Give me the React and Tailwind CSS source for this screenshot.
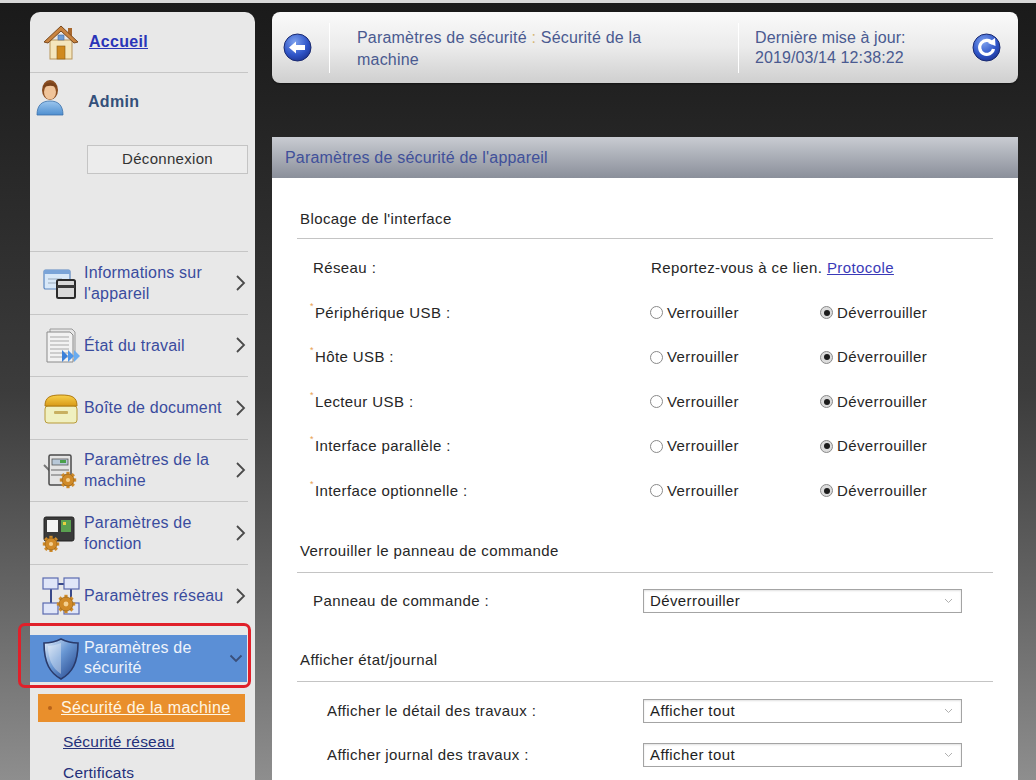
import React from "react";

const Chevron = () => (
  <svg width="11" height="18" viewBox="0 0 11 18" className="shrink-0">
    <path d="M2 2 L9 9 L2 16" fill="none" stroke="#4a4a4a" strokeWidth="1.8" />
  </svg>
);

const HouseIcon = () => (
  <svg width="38" height="38" viewBox="0 0 38 38">
    <rect x="26" y="5" width="4" height="9" fill="#a8682e" />
    <rect x="8" y="17" width="22" height="19" fill="#f4e6bd" stroke="#b8955a" strokeWidth="1" />
    <polygon points="19,3 2,19 6,20 19,8 32,20 36,19" fill="#c98440" stroke="#7a4a1e" strokeWidth="1" />
    <rect x="16" y="12" width="6" height="5" fill="#6f9fd6" stroke="#4a6a9a" strokeWidth="0.6" />
    <rect x="15" y="23" width="8" height="13" fill="#d08a1e" stroke="#8a5a10" strokeWidth="0.6" />
  </svg>
);

const PersonIcon = () => (
  <svg width="30" height="40" viewBox="0 0 30 40">
    <defs>
      <linearGradient id="shirt" x1="0" y1="0" x2="0" y2="1">
        <stop offset="0" stopColor="#9cc6ee" />
        <stop offset="1" stopColor="#4f8fd0" />
      </linearGradient>
    </defs>
    <path d="M2 38 C2 28 7 24 15 24 C23 24 28 28 28 38 Z" fill="url(#shirt)" stroke="#3a70aa" strokeWidth="0.8" />
    <ellipse cx="15" cy="13" rx="8" ry="10" fill="#8a4e22" />
    <ellipse cx="15" cy="15" rx="6" ry="7.5" fill="#f0c49a" />
    <path d="M8 11 C9 4 21 4 22 11 C19 8 12 8 8 11 Z" fill="#7a421a" />
  </svg>
);

const InfoIcon = () => (
  <svg width="38" height="38" viewBox="0 0 38 38">
    <rect x="2" y="6" width="26" height="19" rx="1.5" fill="#d8e8f8" stroke="#5a86c0" strokeWidth="1.2" />
    <rect x="2" y="6" width="26" height="4" fill="#7aa4d8" />
    <line x1="6" y1="15" x2="20" y2="15" stroke="#9ab" strokeWidth="1" />
    <line x1="6" y1="19" x2="16" y2="19" stroke="#9ab" strokeWidth="1" />
    <rect x="15" y="16" width="18" height="18" rx="1.5" fill="#d9d9d9" stroke="#2b2b2b" strokeWidth="2" />
    <rect x="15" y="21" width="18" height="3" fill="#3a3a3a" />
  </svg>
);

const JobIcon = () => (
  <svg width="38" height="38" viewBox="0 0 38 38">
    <polygon points="8,3 30,3 33,6 33,34 8,34" fill="#e6e6e6" stroke="#9a9a9a" strokeWidth="1" />
    <polygon points="5,6 28,6 31,9 31,36 5,36" fill="#f2f2f2" stroke="#8a8a8a" strokeWidth="1" />
    {[11, 15, 19, 23, 27, 31].map((y) => (
      <line key={y} x1="8" y1={y} x2="27" y2={y} stroke="#a8a8a8" strokeWidth="1" />
    ))}
    <polygon points="20,24 26,30 20,36" fill="#3a7fd8" />
    <polygon points="26,24 32,30 26,36" fill="#4e95e8" />
    <polygon points="32,24 38,30 32,36" fill="#6aacf0" />
  </svg>
);

const BoxIcon = () => (
  <svg width="38" height="38" viewBox="0 0 38 38">
    <defs>
      <linearGradient id="lid" x1="0" y1="0" x2="0" y2="1">
        <stop offset="0" stopColor="#f8d04a" />
        <stop offset="1" stopColor="#d89a18" />
      </linearGradient>
    </defs>
    <rect x="3" y="17" width="32" height="17" rx="3" fill="#f0f0c0" stroke="#b89a38" strokeWidth="1" />
    <rect x="12" y="22" width="14" height="3" rx="1" fill="#c8b060" />
    <path d="M3 17 C3 8 8 6 19 6 C30 6 35 8 35 17 Z" fill="url(#lid)" stroke="#b07a10" strokeWidth="1" />
  </svg>
);

const Gear = ({ cx, cy, r, color = "#d08a28" }) => {
  const teeth = [];
  for (let i = 0; i < 8; i++) {
    teeth.push(
      <rect
        key={i}
        x={cx - 1.6}
        y={cy - r - 2.2}
        width="3.2"
        height="4"
        fill={color}
        transform={`rotate(${i * 45} ${cx} ${cy})`}
      />
    );
  }
  return (
    <g>
      {teeth}
      <circle cx={cx} cy={cy} r={r} fill={color} stroke="#8a5a10" strokeWidth="0.6" />
      <circle cx={cx} cy={cy} r={r * 0.35} fill="#f4d090" />
    </g>
  );
};

const MachineIcon = () => (
  <svg width="38" height="38" viewBox="0 0 38 38">
    <line x1="2" y1="14" x2="8" y2="20" stroke="#777" strokeWidth="2" />
    <rect x="7" y="4" width="22" height="30" rx="1.5" fill="#e4e4e4" stroke="#4a4a4a" strokeWidth="1.5" />
    <rect x="10" y="8" width="16" height="6" fill="#b8c8d8" stroke="#555" strokeWidth="0.8" />
    <rect x="18" y="9" width="6" height="3" fill="#4aa04a" />
    <line x1="9" y1="19" x2="27" y2="19" stroke="#666" strokeWidth="1" />
    <line x1="9" y1="24" x2="27" y2="24" stroke="#666" strokeWidth="1" />
    <Gear cx={26} cy={29} r={6} />
  </svg>
);

const FunctionIcon = () => (
  <svg width="38" height="38" viewBox="0 0 38 38">
    <rect x="2" y="3" width="30" height="24" rx="2" fill="#3a3a3a" stroke="#222" strokeWidth="1" />
    <rect x="5" y="6" width="11" height="12" fill="#f4f4f4" />
    <rect x="19" y="6" width="10" height="12" fill="#5aa050" />
    <rect x="21" y="8" width="3" height="3" fill="#e8d040" />
    <Gear cx={9} cy={30} r={6} />
  </svg>
);

const NetworkIcon = () => (
  <svg width="38" height="40" viewBox="0 0 38 40">
    <line x1="9" y1="8" x2="29" y2="8" stroke="#3a4a8a" strokeWidth="2" />
    <line x1="9" y1="8" x2="9" y2="32" stroke="#3a4a8a" strokeWidth="2" />
    <line x1="29" y1="8" x2="29" y2="32" stroke="#3a4a8a" strokeWidth="2" />
    <rect x="1" y="2" width="15" height="11" fill="#e0e6f8" stroke="#5a6ab0" strokeWidth="1.2" />
    <rect x="22" y="2" width="15" height="11" fill="#e0e6f8" stroke="#5a6ab0" strokeWidth="1.2" />
    <rect x="1" y="27" width="15" height="11" fill="#e0e6f8" stroke="#5a6ab0" strokeWidth="1.2" />
    <rect x="22" y="27" width="15" height="11" fill="#e0e6f8" stroke="#5a6ab0" strokeWidth="1.2" />
    <Gear cx={24} cy={28} r={7} />
  </svg>
);

const ShieldIcon = () => (
  <svg width="38" height="44" viewBox="0 0 38 44">
    <defs>
      <linearGradient id="sh" x1="0" y1="0" x2="1" y2="1">
        <stop offset="0" stopColor="#e8f0fa" />
        <stop offset="0.45" stopColor="#6a98d4" />
        <stop offset="1" stopColor="#1e3e86" />
      </linearGradient>
    </defs>
    <path d="M19 2 C25 5 31 6 36 6 C36 26 30 36 19 42 C8 36 2 26 2 6 C7 6 13 5 19 2 Z" fill="url(#sh)" stroke="#2a3a6a" strokeWidth="1.6" />
    <path d="M19 6 C14 8 9 9 6 9 C6 22 10 31 19 37 Z" fill="#ffffff" opacity="0.35" />
  </svg>
);

const BackIcon = () => (
  <svg width="29" height="29" viewBox="0 0 29 29">
    <defs>
      <radialGradient id="bk" cx="0.4" cy="0.3" r="0.8">
        <stop offset="0" stopColor="#7ea2ee" />
        <stop offset="0.6" stopColor="#2f55c8" />
        <stop offset="1" stopColor="#1a2e8a" />
      </radialGradient>
    </defs>
    <circle cx="14.5" cy="14.5" r="13.5" fill="url(#bk)" stroke="#1a2a70" strokeWidth="1" />
    <path d="M6 14.5 L13 8.5 L13 12 L22 12 L22 17 L13 17 L13 20.5 Z" fill="#ffffff" />
  </svg>
);

const RefreshIcon = () => (
  <svg width="29" height="29" viewBox="0 0 29 29">
    <defs>
      <radialGradient id="rf" cx="0.4" cy="0.3" r="0.8">
        <stop offset="0" stopColor="#7ea2ee" />
        <stop offset="0.6" stopColor="#2f55c8" />
        <stop offset="1" stopColor="#1a2e8a" />
      </radialGradient>
    </defs>
    <circle cx="14.5" cy="14.5" r="13.5" fill="url(#rf)" stroke="#1a2a70" strokeWidth="1" />
    <path d="M20.5 10.5 A7 7 0 1 0 21.5 16" fill="none" stroke="#ffffff" strokeWidth="3.2" />
    <polygon points="16,10 23,5 23.5,13" fill="#ffffff" />
  </svg>
);

const SelectArrow = () => (
  <svg width="9" height="6" viewBox="0 0 9 6">
    <path d="M1 1 L4.5 4.5 L8 1" fill="none" stroke="#b0b0b0" strokeWidth="1" />
  </svg>
);

const Radio = ({ checked }) =>
  checked ? (
    <span className="w-[13px] h-[13px] rounded-full border border-[#8a8a8a] bg-[#dcdcdc] flex items-center justify-center shrink-0">
      <span className="w-[6px] h-[6px] rounded-full bg-[#1c1c1c]" />
    </span>
  ) : (
    <span className="w-[13px] h-[13px] rounded-full border border-[#8a8a8a] bg-white shrink-0" />
  );

const Select = ({ value }) => (
  <div className="w-[319px] h-[24px] border border-[#a4a4a4] shadow-[inset_0_1px_2px_rgba(0,0,0,0.12)] bg-white flex items-center justify-between pl-[6px] pr-[8px] text-[15px] text-[#1e1e1e]">
    <span>{value}</span>
    <SelectArrow />
  </div>
);

const menu = [
  { icon: <InfoIcon />, lines: ["Informations sur", "l'appareil"] },
  { icon: <JobIcon />, lines: ["État du travail"] },
  { icon: <BoxIcon />, lines: ["Boîte de document"] },
  { icon: <MachineIcon />, lines: ["Paramètres de la", "machine"] },
  { icon: <FunctionIcon />, lines: ["Paramètres de", "fonction"] },
  { icon: <NetworkIcon />, lines: ["Paramètres réseau"] },
];

const radioRows = [
  "Périphérique USB :",
  "Hôte USB :",
  "Lecteur USB :",
  "Interface parallèle :",
  "Interface optionnelle :",
];

export default function App() {
  return (
    <div className="w-[1036px] h-[780px] overflow-hidden border-t-[3px] border-[#d8d8d8] bg-gradient-to-b from-[#1a1a1a] via-[#3c3c3c] to-[#8e8e8e] flex gap-[17px] pl-[30px] pt-[9px] font-['Liberation_Sans',Arial,sans-serif]">
      {/* Sidebar */}
      <div className="w-[225px] h-[800px] shrink-0 rounded-t-[10px] bg-[#e8e8e8] flex flex-col">
        <div className="h-[61px] border-b border-[#c6c6c6] mr-[7px] flex items-center pl-[12px] gap-[9px]">
          <HouseIcon />
          <span className="text-[16px] font-bold text-[#2a34b8] underline tracking-[0.3px]">Accueil</span>
        </div>
        <div className="h-[179px] border-b border-[#c6c6c6] mr-[7px] flex flex-col">
          <div className="flex items-start pl-[5px] pt-[4px] gap-[23px]">
            <PersonIcon />
            <span className="text-[16px] font-bold text-[#34507a] mt-[13px] tracking-[0.3px]">Admin</span>
          </div>
          <div className="ml-[57px] mt-[28px] w-[161px] h-[29px] border border-[#c4c4c4] bg-[#ececec] flex items-center justify-center text-[15px] text-[#333] tracking-[0.3px]">
            Déconnexion
          </div>
        </div>
        {menu.map((m, i) => (
          <div
            key={i}
            className={`h-[62.5px] mr-[7px] flex items-center pl-[12px] pr-[2px] ${i < menu.length - 1 ? "border-b border-[#c6c6c6]" : ""}`}
          >
            <div className="w-[42px] flex justify-start shrink-0">{m.icon}</div>
            <div className="flex-1 text-[16px] leading-[21px] text-[#3a4c9e] tracking-[0.2px] whitespace-nowrap">
              {m.lines.map((l) => (
                <div key={l}>{l}</div>
              ))}
            </div>
            <Chevron />
          </div>
        ))}
        <div className="relative mt-[8px] mr-[8px] h-[47px]">
          <div className="absolute -left-[12px] -right-[4px] -top-[12px] -bottom-[6px] rounded-[7px] border-[3px] border-[#e0202a]" />
          <div className="h-full bg-[#5b8fd6] flex items-center pl-[12px] pr-[4px]">
            <div className="w-[42px] shrink-0">
              <ShieldIcon />
            </div>
            <div className="flex-1 self-start mt-[3px] text-[16px] leading-[20px] text-[#eef3fb] whitespace-nowrap tracking-[0.2px]">
              <div>Paramètres de</div>
              <div>sécurité</div>
            </div>
            <svg width="14" height="9" viewBox="0 0 14 9">
              <path d="M1.5 1.5 L7 7 L12.5 1.5" fill="none" stroke="#3a4f7a" strokeWidth="1.8" />
            </svg>
          </div>
        </div>
        <div className="mt-[12px] ml-[8px] mr-[10px] h-[28px] bg-[#e98f2c] flex items-center pl-[10px] gap-[9px]">
          <span className="w-[4px] h-[4px] rounded-full bg-[#b8621a]" />
          <span className="text-[16px] text-[#fff6e4] underline tracking-[0.3px]">Sécurité de la machine</span>
        </div>
        <div className="mt-[8px] h-[24px] flex items-center pl-[33px] text-[15.5px] text-[#24307a] underline tracking-[0.2px]">
          Sécurité réseau
        </div>
        <div className="mt-[7px] h-[24px] flex items-center pl-[33px] text-[15.5px] text-[#24307a] tracking-[0.2px]">
          Certificats
        </div>
      </div>

      {/* Main */}
      <div className="w-[746px] shrink-0 flex flex-col">
        <div className="h-[71px] rounded-[8px] bg-gradient-to-b from-[#fafafa] via-[#ebebeb] to-[#cfcfcf] flex items-center shadow-[0_1px_2px_rgba(0,0,0,0.4)]">
          <div className="pl-[11px] pr-[17px] flex items-center">
            <BackIcon />
          </div>
          <div className="w-px h-[50px] bg-[#b8b8b8] border-r border-white" />
          <div className="pl-[27px] w-[408px] text-[16px] leading-[22px] text-[#4a5a90] tracking-[0.2px] mt-[2px]">
            <div>
              Paramètres de sécurité <span className="text-[#d6b878]">:</span> Sécurité de la
            </div>
            <div>machine</div>
          </div>
          <div className="w-px h-[50px] bg-[#b8b8b8] border-r border-white" />
          <div className="pl-[16px] flex-1 text-[16px] leading-[20px] text-[#4a5a90] tracking-[0.1px]">
            <div>Dernière mise à jour:</div>
            <div>2019/03/14 12:38:22</div>
          </div>
          <div className="pr-[17px]">
            <RefreshIcon />
          </div>
        </div>

        <div className="mt-[54px] flex-1 bg-white flex flex-col">
          <div className="h-[41px] bg-gradient-to-b from-[#c9ccd2] to-[#8a8f9a] flex items-center pl-[13px] text-[16px] text-[#40509a] tracking-[0.2px]">
            Paramètres de sécurité de l'appareil
          </div>
          <div className="px-[25px] text-[15px] text-[#262626] tracking-[0.4px]">
            <div className="pt-[31px] pb-[9px] pl-[3px] leading-[20px] border-b border-[#c4c4c4]">Blocage de l'interface</div>
            <div className="pt-[7px]">
              <div className="h-[44.5px] flex items-center">
                <div className="w-[353px] pl-[16px]">Réseau :</div>
                <div className="pl-[1px]">
                  Reportez-vous à ce lien. <span className="text-[#3a3ab8] underline">Protocole</span>
                </div>
              </div>
              {radioRows.map((r) => (
                <div key={r} className="h-[44.5px] flex items-center">
                  <div className="w-[353px] pl-[13px] flex items-start">
                    <span className="text-[9px] leading-[10px] text-[#e8a050] mr-[1px] -mt-[1px]">*</span>
                    <span>{r}</span>
                  </div>
                  <div className="w-[170px] flex items-center gap-[4px]">
                    <Radio />
                    <span>Verrouiller</span>
                  </div>
                  <div className="flex items-center gap-[4px]">
                    <Radio checked />
                    <span>Déverrouiller</span>
                  </div>
                </div>
              ))}
            </div>
            <div className="mt-[28px] pb-[11px] pl-[3px] leading-[20px] border-b border-[#c4c4c4]">
              Verrouiller le panneau de commande
            </div>
            <div className="mt-[16px] h-[24px] flex items-center">
              <div className="w-[346px] pl-[16px]">Panneau de commande :</div>
              <Select value="Déverrouiller" />
            </div>
            <div className="mt-[37px] pb-[11px] pl-[3px] leading-[20px] border-b border-[#c4c4c4]">Afficher état/journal</div>
            <div className="mt-[17px] h-[24px] flex items-center">
              <div className="w-[346px] pl-[30px]">Afficher le détail des travaux :</div>
              <Select value="Afficher tout" />
            </div>
            <div className="mt-[20px] h-[24px] flex items-center">
              <div className="w-[346px] pl-[30px]">Afficher journal des travaux :</div>
              <Select value="Afficher tout" />
            </div>
          </div>
        </div>
      </div>
    </div>
  );
}
